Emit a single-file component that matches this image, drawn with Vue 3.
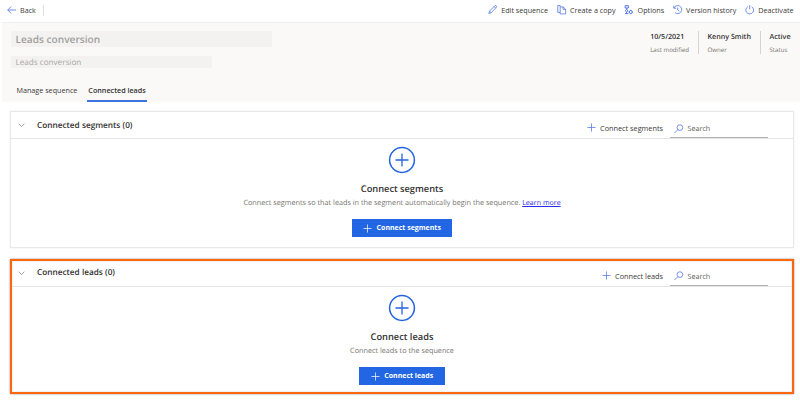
<script setup>
const actions = [
  { icon: 'edit', label: 'Edit sequence' },
  { icon: 'copy', label: 'Create a copy' },
  { icon: 'options', label: 'Options' },
  { icon: 'history', label: 'Version history' },
  { icon: 'power', label: 'Deactivate' },
]

const facts = [
  { value: '10/5/2021', label: 'Last modified' },
  { value: 'Kenny Smith', label: 'Owner' },
  { value: 'Active', label: 'Status' },
]

const panels = [
  {
    id: 'segments',
    title: 'Connected segments (0)',
    action: 'Connect segments',
    text: 'Connect segments so that leads in the segment automatically begin the sequence.',
    link: 'Learn more',
  },
  {
    id: 'leads',
    title: 'Connected leads (0)',
    action: 'Connect leads',
    text: 'Connect leads to the sequence',
    highlighted: true,
  },
]
</script>

<template>
  <div class="page">
    <nav class="topbar">
      <button class="back">
        <svg class="back-icon" viewBox="0 0 9 8"><path d="M9 4H.7M4.2.5.7 4l3.5 3.5" /></svg>
        <span>Back</span>
      </button>
      <div class="actions">
        <button v-for="a in actions" :key="a.icon" class="action" :class="a.icon">
          <svg class="icon" viewBox="0 0 10 10">
            <template v-if="a.icon === 'edit'">
              <path d="M.9 9.1l.7-2.6L7.2.9q.8-.7 1.6 0 .8.9 0 1.7L3.3 8.3zM1.6 6.5l1.8 1.8M6.5 1.7l1.8 1.8" />
            </template>
            <template v-else-if="a.icon === 'copy'">
              <path d="M3.4 1.8V.6H.8v7.3h2.4M3.4 2h3.2l2.6 2.5v5H3.4zM6.5 2.1v2.5h2.6" />
            </template>
            <template v-else-if="a.icon === 'options'">
              <path d="M1.2.7h3.4v2.5H1.2zM2.9 3.2v1.6M1.3 6.1l1.5-1.4 1.5 1.4-1.5 1.4zM1 9.2h3.5M2.8 7.5v1.7" />
              <circle cx="7.2" cy="7.5" r="1.6" />
              <path d="M7.2 5.1V6M7.2 9v.8M4.9 7.5h.8M8.7 7.5h.8" />
            </template>
            <template v-else-if="a.icon === 'history'">
              <path d="M1 3.2a4.3 4.3 0 1 1 1 4.8M.8.8v2.6h2.6M5 2.7v2.6l1.8 1.6" />
            </template>
            <template v-else>
              <path d="M3 1.8a4.1 4.1 0 1 0 4 0M5 .2v4.4" />
            </template>
          </svg>
          <span>{{ a.label }}</span>
        </button>
      </div>
    </nav>

    <header class="header">
      <div class="summary">
        <div class="names">
          <h1 class="name">Leads conversion</h1>
          <p class="description">Leads conversion</p>
        </div>
        <dl class="facts">
          <div v-for="f in facts" :key="f.label" class="fact">
            <dt>{{ f.value }}</dt>
            <dd>{{ f.label }}</dd>
          </div>
        </dl>
      </div>
      <div class="tabs">
        <button class="tab">Manage sequence</button>
        <button class="tab selected">Connected leads</button>
      </div>
    </header>

    <main class="content">
      <section
        v-for="p in panels"
        :key="p.id"
        class="panel"
        :class="{ highlighted: p.highlighted }"
      >
        <div class="panel-head">
          <svg class="chevron" viewBox="0 0 8 5"><path d="M.7.8 4 4.1 7.3.8" /></svg>
          <h2 class="panel-title">{{ p.title }}</h2>
          <button class="connect">
            <svg class="plus" viewBox="0 0 10 10"><path d="M5 .5v9M.5 5h9" /></svg>
            <span>{{ p.action }}</span>
          </button>
          <label class="search">
            <svg class="search-icon" viewBox="0 0 10 10">
              <circle cx="6.2" cy="3.8" r="3" />
              <path d="M4 6 .6 9.4" />
            </svg>
            <span>Search</span>
          </label>
        </div>
        <div class="empty">
          <svg class="badge" viewBox="0 0 28 28">
            <circle cx="14" cy="14" r="12.4" />
            <path d="M14 7.5v13M7.5 14h13" />
          </svg>
          <h3 class="empty-title">{{ p.action }}</h3>
          <p class="empty-text">
            {{ p.text }} <a v-if="p.link" class="link">{{ p.link }}</a>
          </p>
          <button class="primary">
            <svg class="plus" viewBox="0 0 10 10"><path d="M5 .5v9M.5 5h9" /></svg>
            <span>{{ p.action }}</span>
          </button>
        </div>
      </section>
    </main>
  </div>
</template>

<style>
body {
  background: #fff;
}
</style>

<style scoped>
.page {
  box-sizing: border-box;
  width: 800px;
  height: 402px;
  overflow: hidden;
  padding-left: 2px;
  font-family: 'Open Sans', 'Noto Sans', sans-serif;
  font-size: 7.2px;
  line-height: 10px;
  color: #3b3a39;
  text-rendering: geometricPrecision;
}
h1, h2, h3, p, dl, dd {
  margin: 0;
}
button {
  display: flex;
  align-items: center;
  padding: 0;
  border: 0;
  background: none;
  font: inherit;
  color: inherit;
  white-space: nowrap;
}
svg {
  display: block;
  flex: none;
  fill: none;
  stroke: #4a6fe3;
  stroke-width: 0.8;
  overflow: visible;
}

.topbar {
  display: flex;
  justify-content: space-between;
  align-items: center;
  box-sizing: border-box;
  height: 22px;
  padding: 0 6.5px 2px 4.5px;
}
.back {
  height: 11px;
  padding-right: 7px;
  border-right: 1.5px solid #dedddb;
  gap: 4.5px;
}
.back-icon {
  width: 9px;
  height: 8px;
}
.actions {
  display: flex;
  gap: 8.6px;
}
.action {
  gap: 4px;
}
.icon {
  width: 9.4px;
  height: 9.4px;
}
.options .icon {
  stroke-width: 1;
}

.header {
  box-sizing: border-box;
  height: 80px;
  background: #faf9f8;
  border-top: 1px solid #f1f0ef;
}
.summary {
  display: flex;
  justify-content: space-between;
  box-sizing: border-box;
  height: 58px;
  padding: 8px 9.5px 0 9px;
}
.name {
  box-sizing: border-box;
  width: 261px;
  height: 15.5px;
  padding-left: 4.5px;
  background: #f3f2f1;
  color: #a19f9d;
  font-size: 10.15px;
  font-weight: 600;
  line-height: 16px;
}
.description {
  box-sizing: border-box;
  width: 201px;
  height: 12px;
  margin-top: 9.5px;
  padding-left: 4.5px;
  background: #f3f2f1;
  color: #a8a6a4;
  font-size: 8.15px;
  line-height: 13px;
}
.facts {
  display: flex;
  height: 23px;
}
.fact + .fact {
  margin-left: 9px;
  padding-left: 8.5px;
  border-left: 1px solid #d6d4d2;
}
.fact dt {
  height: 13px;
  font-size: 7.15px;
  font-weight: 600;
  line-height: 13px;
  color: #323130;
}
.fact dd {
  font-size: 6.15px;
  line-height: 11px;
  color: #75736f;
}
.tabs {
  display: flex;
  height: 21px;
  padding-left: 14.5px;
}
.tab {
  box-sizing: border-box;
  height: 21px;
  padding-bottom: 2px;
  border-bottom: 2px solid transparent;
}
.tab.selected {
  margin-left: 10px;
  padding-left: 1px;
  padding-right: 1px;
  border-bottom-color: #3f73e0;
  font-weight: 600;
  color: #323130;
}

.content {
  padding: 9px 6px 0 8px;
}
.panel {
  box-sizing: border-box;
  height: 137px;
  border: 1px solid #e9e8e7;
  box-shadow: 0 0 1.5px rgba(0, 0, 0, 0.1);
}
.panel.highlighted {
  height: 135px;
  margin-top: 11px;
  border: 2px solid #fb670a;
  box-shadow: 0 0 2px rgba(60, 70, 80, 0.6), inset 0 0 1.5px rgba(60, 70, 80, 0.4);
}
.panel-head {
  display: flex;
  box-sizing: border-box;
  height: 27px;
  padding: 0 25px 0 6.5px;
  border-bottom: 1px solid #e6e5e4;
}
.highlighted .panel-head {
  height: 26px;
  padding: 0 24px 0 5.5px;
}
.chevron {
  width: 7px;
  height: 4.4px;
  margin-top: 11px;
  stroke: #777;
}
.panel-title {
  flex: 1;
  margin-left: 12.5px;
  font-size: 8.25px;
  font-weight: 600;
  line-height: 27px;
  color: #323130;
}
.connect {
  height: 31px;
  gap: 4px;
  margin-right: 7px;
  font-size: 7.3px;
}
.plus {
  width: 9px;
  height: 9px;
}
.search {
  display: flex;
  box-sizing: border-box;
  width: 98px;
  height: 26px;
  border-bottom: 1px solid #b3b1af;
  line-height: 34px;
  color: #605e5c;
}
.search-icon {
  width: 9.5px;
  height: 9.5px;
  margin: 11.5px 4px 0;
}
.highlighted .chevron {
  margin-top: 10px;
}
.highlighted .panel-title {
  line-height: 24px;
}
.highlighted .connect {
  height: 29px;
}
.highlighted .search {
  height: 25px;
  line-height: 32px;
}
.highlighted .search-icon {
  margin-top: 10px;
}

.empty {
  display: flex;
  flex-direction: column;
  align-items: center;
  padding-top: 7px;
}
.badge {
  width: 28px;
  height: 28px;
  stroke: #2463e2;
  stroke-width: 1.5;
}
.badge path {
  stroke-width: 1.3;
}
.empty-title {
  margin-top: 7.5px;
  font-size: 9.25px;
  font-weight: 600;
  line-height: 14px;
  color: #323130;
}
.empty-text {
  margin-top: 2.5px;
  font-size: 7.25px;
  line-height: 11px;
  color: #75736f;
}
.link {
  font-size: 7.1px;
  color: #2b2bee;
  text-decoration: underline;
}
.primary {
  height: 18px;
  margin-top: 10px;
  padding: 0 11.5px;
  gap: 4.5px;
  background: #2266e3;
  color: #fff;
  font-size: 7px;
  font-weight: 700;
}
.primary .plus {
  stroke: #fff;
}
</style>
